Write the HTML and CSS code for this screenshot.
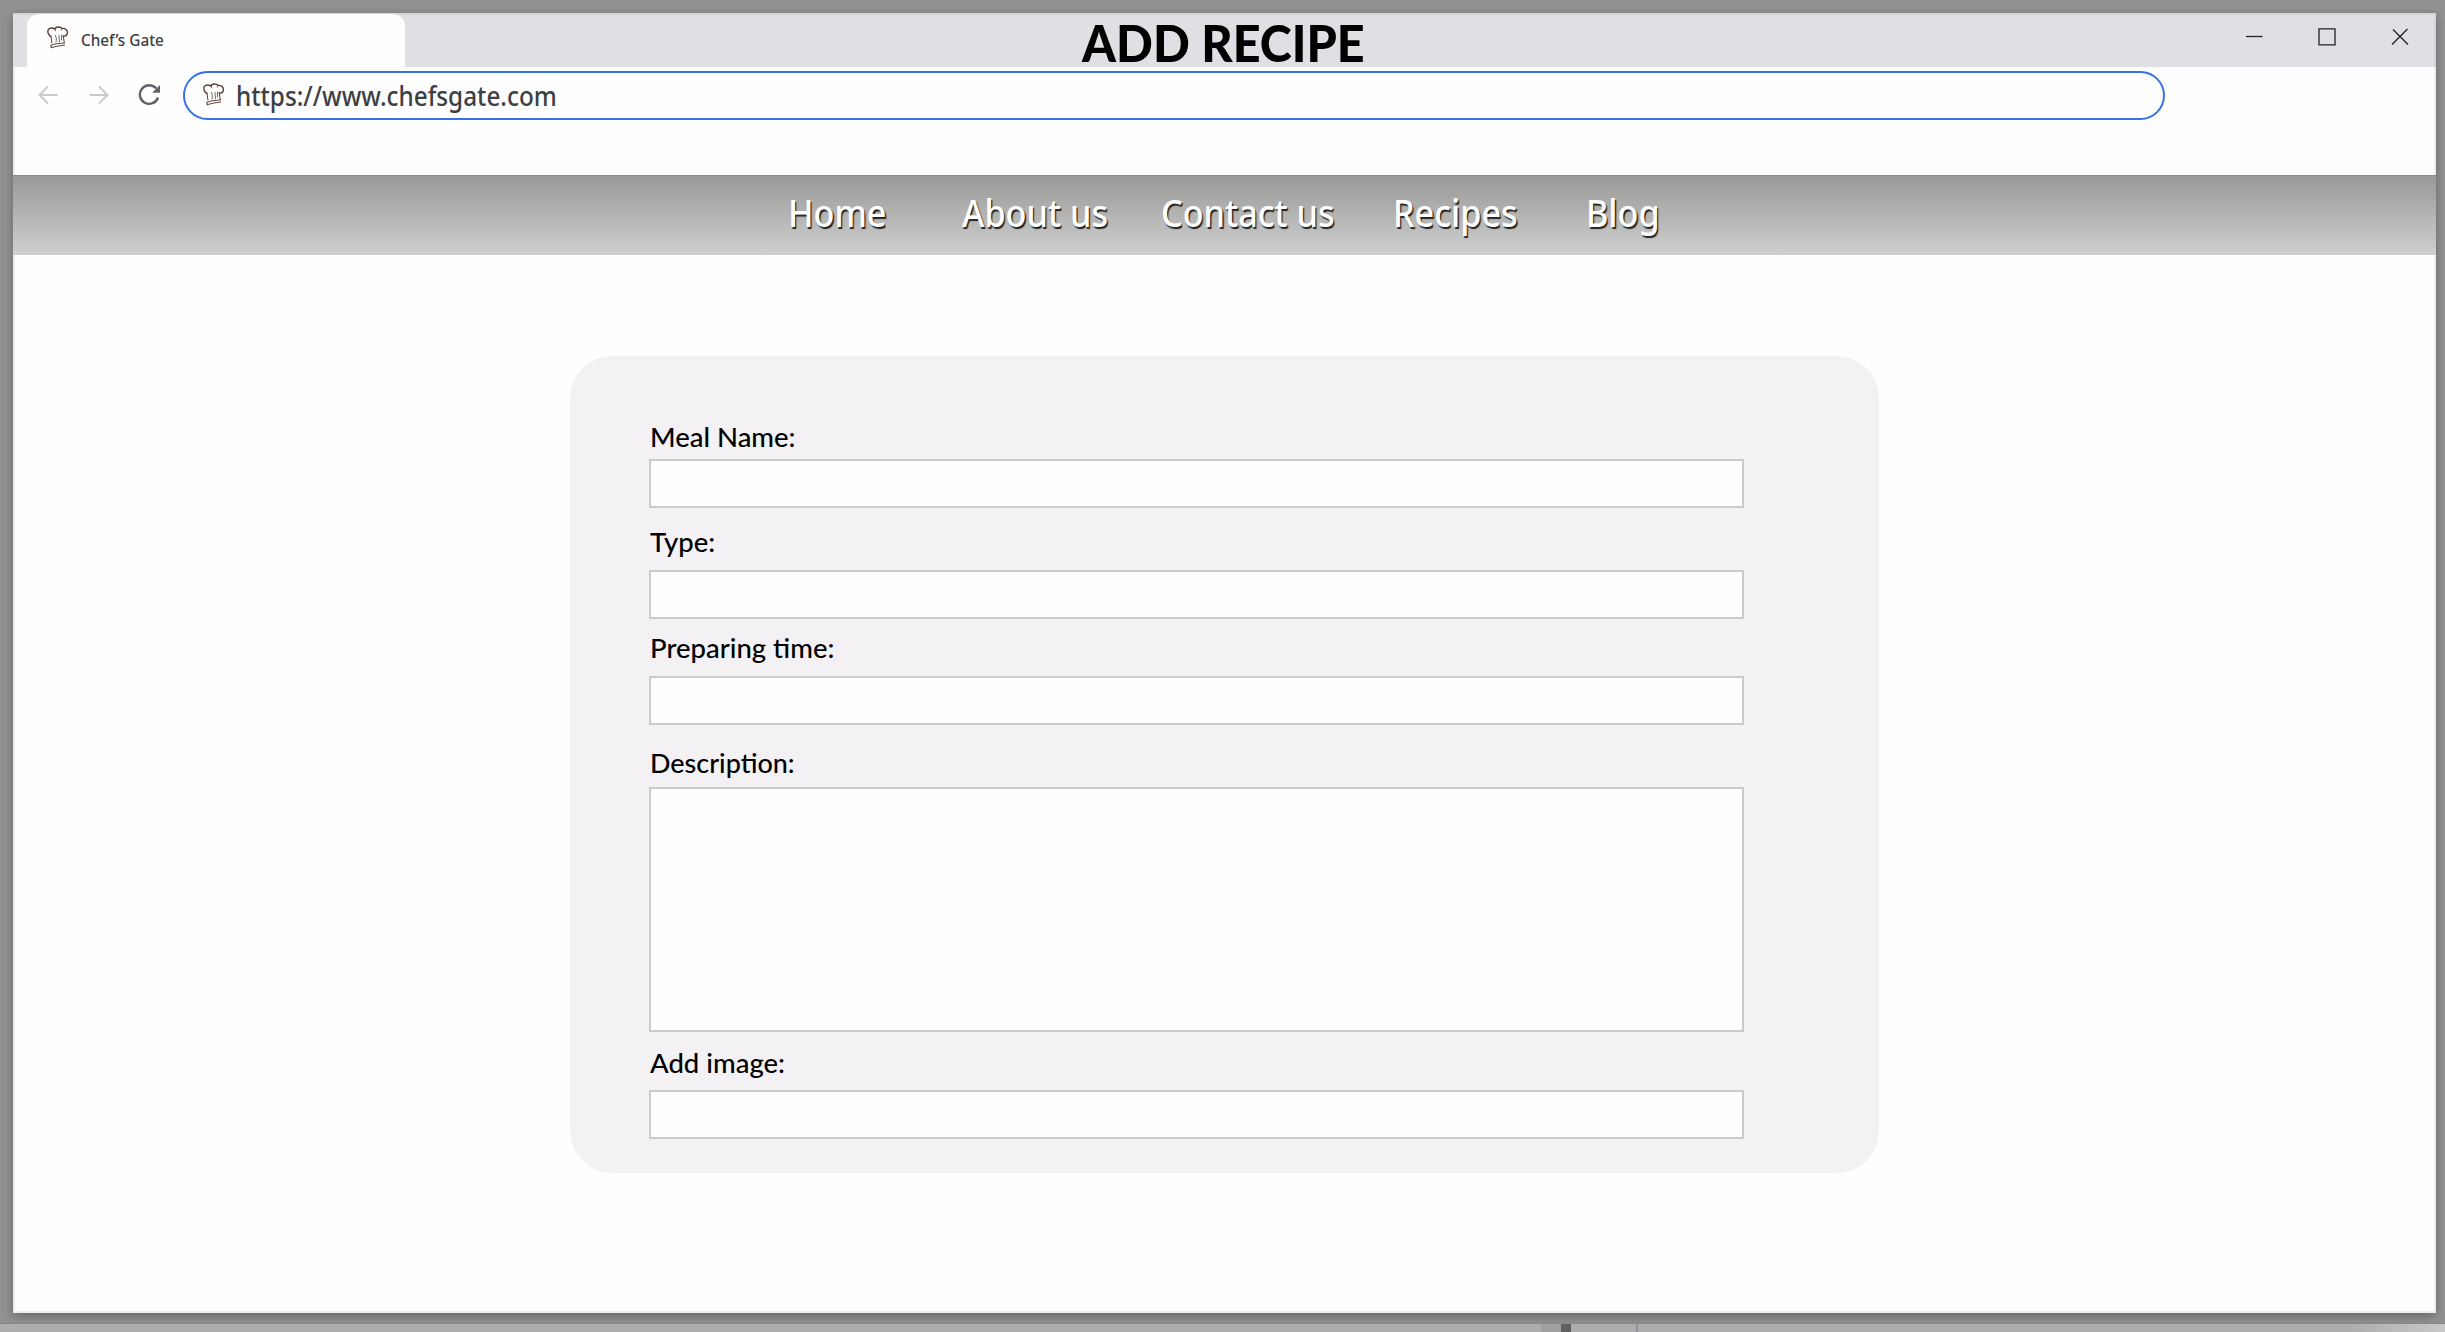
FILE: index.html
```html
<!DOCTYPE html>
<html lang="en">
<head>
<meta charset="utf-8">
<title>Chef’s Gate</title>
<link rel="stylesheet" href="styles.css">
</head>
<body>
<svg class="defs" width="0" height="0" aria-hidden="true">
  <symbol id="chef-hat" viewBox="0 0 22 23">
    <g fill="none" stroke="#5b4037" stroke-linecap="round" stroke-linejoin="round">
      <path stroke-width="1.400" d="M4 10.500C1.500 9.500 .2 6 1.300 3.500 2.800 1.800 5.500 1.800 8 3 8.500 .6 13.500 .2 15 2.500 18 2 20.500 4 20.500 6.500 20.500 9 18.500 10.500 16.300 10"/>
      <path stroke-width="1" d="M4 10.500 4.900 17M16.300 10 17.300 16.700M4 19.300C8 17.300 12 17.800 17.600 16.800M4.200 21.700C8 20.600 13 19.500 17.700 19M4 19.300 4.200 21.700"/>
      <path stroke-width=".8" d="M8.500 9.500C9.600 12 9.600 14 9 16M12 9.500 12.500 15.800M14.600 9 14.500 14M8 3 8.600 4.800M15 2.500 14.300 4.200"/>
    </g>
  </symbol>
</svg>
<div class="window">
  <header class="titlebar">
    <div class="tab">
      <svg class="hat"><use href="#chef-hat"/></svg>
      <span class="tab-title">Chef’s Gate</span>
    </div>
    <h1 class="page-title">ADD RECIPE</h1>
    <div class="controls">
      <svg width="18" height="18" viewBox="0 0 18 18"><path d="M1 8.500H17.500"/></svg>
      <svg width="18" height="18" viewBox="0 0 18 18"><path d="M1 .8H17V16.800H1Z"/></svg>
      <svg width="18" height="18" viewBox="0 0 18 18"><path d="M2 1.500 17 16.500M16.500 1 1 16.500"/></svg>
    </div>
  </header>
  <div class="toolbar">
    <svg class="nav-icon" width="20" height="20" viewBox="0 0 20 20"><path d="M19.500 10H2M10 1.500 1.500 10 10 18.500"/></svg>
    <svg class="nav-icon" width="20" height="20" viewBox="0 0 20 20"><path d="M.5 10H18M10 1.500 18.500 10 10 18.500"/></svg>
    <svg class="reload" width="23" height="22" viewBox="0 0 23 22"><path class="ring" d="M18.300 4.600A9.300 9.300 0 1 0 20 13.500"/><path class="head" d="M22 1V8.800H14.200Z"/></svg>
    <div class="address">
      <svg class="hat"><use href="#chef-hat"/></svg>
      <span class="url">https://www.chefsgate.com</span>
    </div>
  </div>
  <nav class="menu">
    <a class="home">Home</a>
    <a class="about">About us</a>
    <a class="contact">Contact us</a>
    <a class="recipes">Recipes</a>
    <a class="blog">Blog</a>
  </nav>
  <main>
    <form class="card">
      <label class="meal" for="meal">Meal Name:</label>
      <input id="meal">
      <label class="type" for="type">Type:</label>
      <input id="type">
      <label class="time" for="time">Preparing time:</label>
      <input id="time">
      <label class="description" for="description">Description:</label>
      <textarea id="description"></textarea>
      <label class="image" for="image">Add image:</label>
      <input id="image">
    </form>
  </main>
</div>
<footer class="desk"><i class="block"></i><i class="line"></i></footer>
</body>
</html>
```
FILE: styles.css
```css
* { box-sizing: border-box; }

body {
  margin: 0;
  width: 2445px;
  height: 1332px;
  overflow: hidden;
  display: flex;
  flex-direction: column;
  background: #929292;
  font-family: "Noto Sans", sans-serif;
}

.defs { position: absolute; }

.window {
  flex: none;
  width: 2423px;
  height: 1300px;
  margin: 13px 0 0 13px;
  background: #fefefe;
  box-shadow: 0 3px 10px rgba(0, 0, 0, .3), inset 0 0 0 2px #eeeeee;
}

.titlebar {
  display: grid;
  grid-template-columns: 1055px 1fr 142px;
  height: 54px;
  padding: 1px 28px 0 14px;
  background: #dfe0e4;
  box-shadow: inset 0 2px #d4d4d8, inset -2px 0 #d4d4d8;
}

.tab {
  display: flex;
  align-items: flex-start;
  width: 378px;
  height: 53px;
  padding: 12px 0 0 20px;
  border-radius: 12px 12px 0 0;
  background: #fefefe;
}

.hat { flex: none; width: 22px; height: 23px; }

.tab-title {
  margin: 4px 0 0 12px;
  color: #3c4043;
  font-size: 17px;
  font-weight: 500;
  line-height: 20px;
  white-space: nowrap;
  transform: scaleX(.9);
  transform-origin: left;
}

.page-title {
  margin: 1px 0 0;
  font: 900 51px/56px Lato, sans-serif;
  color: #000;
  white-space: nowrap;
  transform: scaleX(.95);
  transform-origin: left;
}

.controls {
  display: flex;
  gap: 55px;
  padding-top: 14px;
  margin-left: -21px;
}

.controls svg { flex: none; fill: none; stroke: #202124; stroke-width: 1.3; }

.toolbar {
  display: flex;
  align-items: flex-start;
  height: 108px;
  padding: 4px 0 0 25px;
}

.nav-icon {
  margin: 14px 31px 0 0;
  fill: none;
  stroke: #c8cacc;
  stroke-width: 2;
}

.reload { margin: 13px 22px 0 -2px; }
.ring { fill: none; stroke: #5f6368; stroke-width: 2.400; }
.head { fill: #5f6368; }

.address {
  display: flex;
  align-items: flex-start;
  width: 1982px;
  height: 49px;
  padding: 10px 0 0 18px;
  border: 2px solid #3871e0;
  border-radius: 25px;
}

.url {
  margin: 1px 0 0 11px;
  color: #3c4043;
  font-size: 27px;
  font-weight: 500;
  line-height: 24px;
  white-space: nowrap;
  transform: scaleX(.9);
  transform-origin: left;
}

.menu {
  display: grid;
  grid-template-columns: 174px 199px 232px 193px 100px;
  height: 80px;
  padding: 11px 0 0 775px;
  background: linear-gradient(#999998, #cfcfcf);
  border-top: 1px solid #8a8a8a;
}

.menu a {
  justify-self: start;
  color: #fff;
  font-size: 38px;
  font-weight: 500;
  line-height: 50px;
  white-space: nowrap;
  text-shadow: 1.5px 1.5px 1px #222;
  transform: scaleX(.9);
  transform-origin: left;
}

main { padding: 101px 0 0 557px; }

.card {
  display: flex;
  flex-direction: column;
  align-items: flex-start;
  width: 1309px;
  height: 817px;
  padding: 65px 0 0 79px;
  border-radius: 42px;
  background: #f3f1f3;
}

.card label {
  height: 32px;
  margin-left: 1px;
  font: 500 26px/32px Lato, sans-serif;
  color: #000;
  white-space: nowrap;
  transform: scaleX(1.057);
  transform-origin: left;
}

.card input,
.card textarea {
  display: block;
  width: 1095px;
  height: 49px;
  padding: 0;
  border: 2px solid #cbcbcb;
  border-radius: 0;
  background: #fefefe;
  resize: none;
  outline: 0;
}

.card input { margin: 6px 0 0; }
.card .type { margin-top: 18px; }
.card #type { margin-top: 12px; }
.card .time { margin-top: 13px; }
.card #time { margin-top: 12px; }
.card .description { margin-top: 22px; transform: scaleX(1.037); }
.card #description { height: 245px; margin: 8px 0 0; }
.card .image { margin-top: 15px; }
.card #image { margin-top: 11px; }

.desk {
  flex: none;
  display: flex;
  height: 9px;
  margin-top: 10px;
  padding-left: 1541px;
  background: linear-gradient(90deg, #adadad 96%, #c8c8c8);
  border-top: 1px solid #858585;
}

.block { width: 30px; border-left: 20px solid #a0a0a0; background: #606060; }
.line { width: 2px; margin-left: 65px; background: #92929c; }
```
